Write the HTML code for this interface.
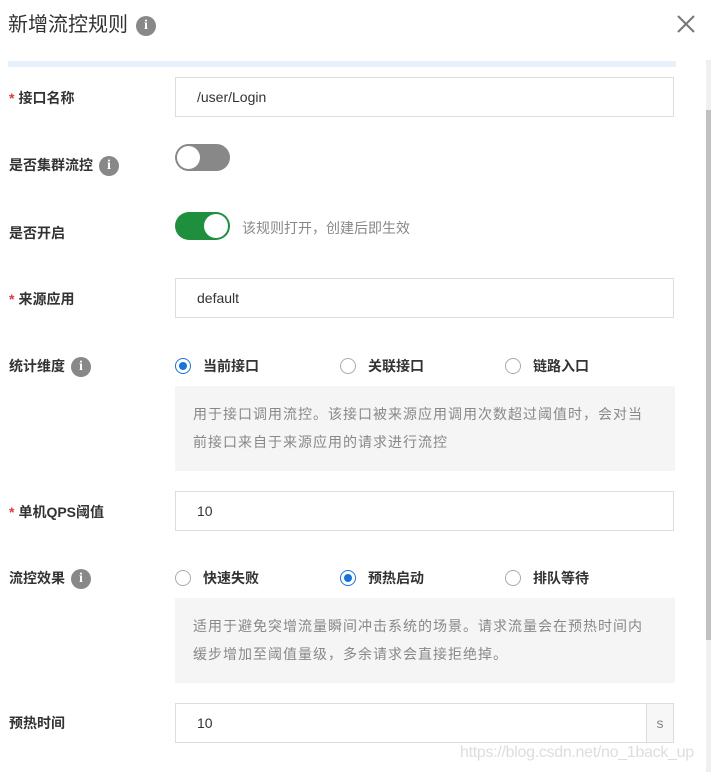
<!DOCTYPE html>
<html><head><meta charset="utf-8"><style>
*{margin:0;padding:0;box-sizing:border-box}
body{width:711px;height:772px;background:#fff;position:relative;overflow:hidden;font-family:"Liberation Sans","Noto Sans CJK SC",sans-serif;color:#333}
.a{position:absolute}
.lbl{position:absolute;left:9px;font-size:14px;font-weight:bold;color:#333;line-height:20px}
.star{color:#e0393e;margin-right:4px}
.inp{position:absolute;left:175px;width:499px;height:40px;border:1px solid #ddd;font-size:14px;line-height:38px;padding-left:21px;color:#333}
.info{display:inline-block;width:20px;height:20px;border-radius:50%;background:#888;color:#fff;font:bold 14px/20px "Liberation Serif",serif;text-align:center;vertical-align:middle;margin-left:6px}
.rad{position:absolute;font-size:14px;font-weight:bold;line-height:20px}
.rad i{display:inline-block;width:16px;height:16px;border:1px solid #aaa;border-radius:50%;vertical-align:-3px;margin-right:12px;position:relative}
.rad i.on{border-color:#1a73d9}
.rad i.on:after{content:"";position:absolute;left:3px;top:3px;width:8px;height:8px;border-radius:50%;background:#1a73d9}
.box{position:absolute;left:175px;width:500px;height:85px;background:#f5f5f5;font-size:14px;color:#888;line-height:28px;padding:14px 10px 14px 18px;white-space:nowrap;letter-spacing:1px}
</style></head><body>
<div class="a" style="left:8px;top:12px;font-size:20px;color:#333;line-height:26px">新增流控规则<span class="info" style="margin-left:8px">i</span></div>
<svg class="a" style="left:677px;top:15px" width="18" height="18"><path d="M1 1L17 17M17 1L1 17" stroke="#777" stroke-width="2"/></svg>
<div class="a" style="left:8px;top:61px;height:6px;background:#e6f1fb;width:668px"></div>
<div class="a" style="left:706px;top:60px;width:5px;height:712px;background:#f0f0f0"></div>
<div class="a" style="left:706px;top:110px;width:5px;height:530px;background:#c1c1c1"></div>

<div class="lbl" style="top:88px"><span class="star">*</span>接口名称</div>
<div class="inp" style="top:77px">/user/Login</div>

<div class="lbl" style="top:155px">是否集群流控<span class="info">i</span></div>
<div class="a" style="left:175px;top:144px;width:55px;height:27px;border-radius:14px;background:#888"><div class="a" style="left:2px;top:2px;width:23px;height:23px;border-radius:50%;background:#fff"></div></div>

<div class="lbl" style="top:223px">是否开启</div>
<div class="a" style="left:175px;top:212px;width:55px;height:28px;border-radius:14px;background:#1f8e3d"><div class="a" style="left:29px;top:2px;width:24px;height:24px;border-radius:50%;background:#fff"></div></div>
<div class="a" style="left:242px;top:218px;font-size:14px;color:#888;line-height:20px">该规则打开，创建后即生效</div>

<div class="lbl" style="top:289px"><span class="star">*</span>来源应用</div>
<div class="inp" style="top:278px">default</div>

<div class="lbl" style="top:356px">统计维度<span class="info">i</span></div>
<div class="rad" style="left:175px;top:356px"><i class="on"></i>当前接口</div>
<div class="rad" style="left:340px;top:356px"><i></i>关联接口</div>
<div class="rad" style="left:505px;top:356px"><i></i>链路入口</div>
<div class="box" style="top:386px">用于接口调用流控。该接口被来源应用调用次数超过阈值时，会对当<br>前接口来自于来源应用的请求进行流控</div>

<div class="lbl" style="top:502px"><span class="star">*</span>单机QPS阈值</div>
<div class="inp" style="top:491px">10</div>

<div class="lbl" style="top:568px">流控效果<span class="info">i</span></div>
<div class="rad" style="left:175px;top:568px"><i></i>快速失败</div>
<div class="rad" style="left:340px;top:568px"><i class="on"></i>预热启动</div>
<div class="rad" style="left:505px;top:568px"><i></i>排队等待</div>
<div class="box" style="top:598px">适用于避免突增流量瞬间冲击系统的场景。请求流量会在预热时间内<br>缓步增加至阈值量级，多余请求会直接拒绝掉。</div>

<div class="lbl" style="top:713px">预热时间</div>
<div class="inp" style="top:703px">10</div>
<div class="a" style="left:646px;top:703px;width:28px;height:40px;border:1px solid #ddd;background:#f7f7f7;font-size:14px;color:#888;line-height:38px;text-align:center">s</div>
<div class="a" style="left:460px;top:742px;font-size:16px;letter-spacing:-0.3px;color:#ddd;line-height:22px">https://blog.csdn.net/no_1back_up</div>
</body></html>
